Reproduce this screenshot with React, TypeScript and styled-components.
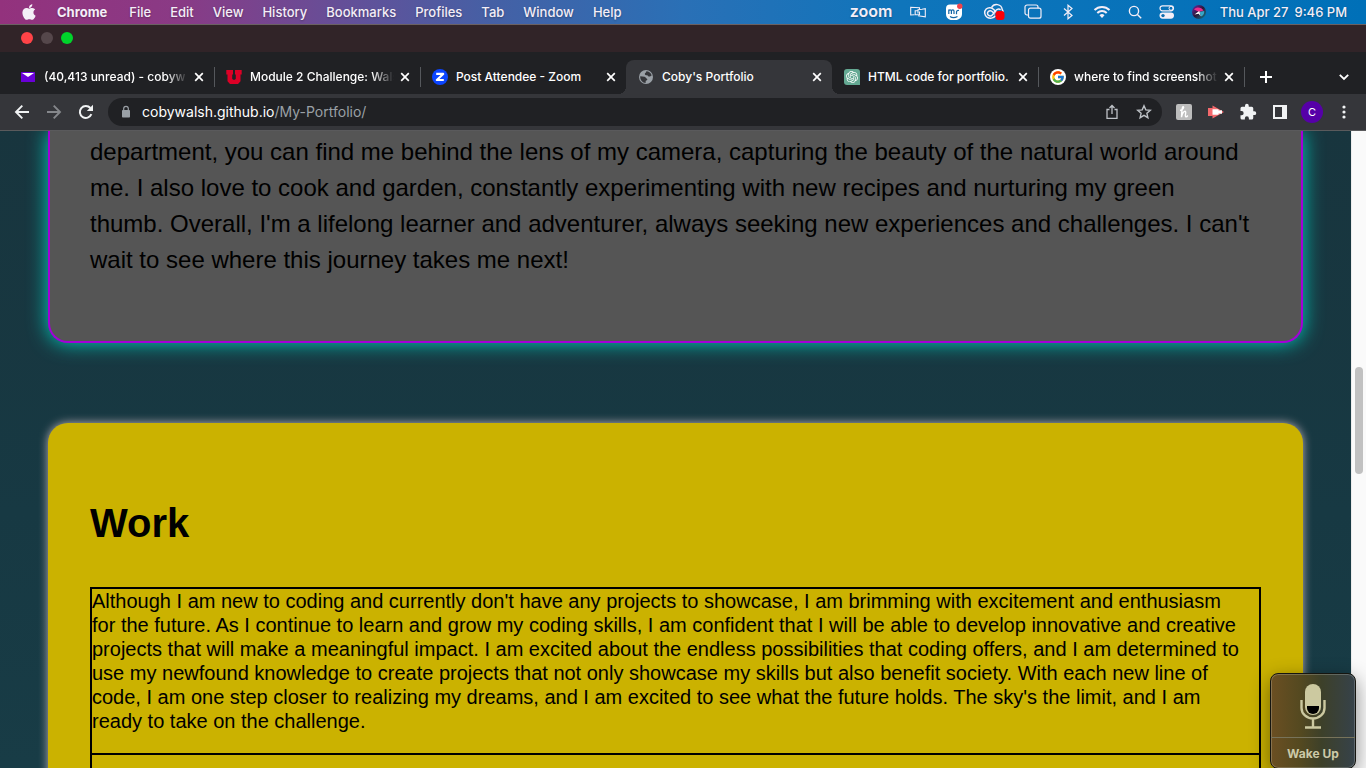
import React, { type ReactNode } from "react";
import styled, { createGlobalStyle, css } from "styled-components";
import { FaApple } from "react-icons/fa";
import { FcGoogle } from "react-icons/fc";
import { SiOpenai } from "react-icons/si";

const ui = `Inter, "Liberation Sans", sans-serif`;
const body = `"Liberation Sans", Helvetica, Arial, sans-serif`;

const GlobalStyle = createGlobalStyle`
  * { box-sizing: border-box; }
  html, body { margin: 0; padding: 0; overflow: hidden; }
  button, input { font: inherit; color: inherit; background: none; border: 0; padding: 0; margin: 0; }
  svg { display: block; flex: none; }
`;

const Screen = styled.div`
  position: relative;
  display: flex;
  flex-direction: column;
  height: 100vh;
  overflow: hidden;
  font-family: ${ui};
`;

/* macOS menu bar */
const MenuBar = styled.header`
  flex: none;
  display: flex;
  align-items: center;
  justify-content: space-between;
  height: 25px;
  padding: 0 19px 0 20px;
  color: #f4eef7;
  font-size: 13px;
  font-weight: 500;
  line-height: 24px;
  white-space: nowrap;
  text-shadow: 0 1px 2px rgba(0, 0, 0, 0.3);
  border-bottom: 1px solid #6b6163;
  background: linear-gradient(90deg, #93327d 0%, #8a3a85 13%, #654f98 25%, #4560a5 36%, #2a70b6 50%, #0f75bb 66%, #0070b8 100%);
`;

const MenuGroup = styled.nav`
  display: flex;
  align-items: center;
  gap: 19px;
`;

const MenuItem = styled.button<{ $bold?: boolean }>`
  font-weight: ${(p) => (p.$bold ? 700 : 500)};
  padding-right: ${(p) => (p.$bold ? "3px" : "0")};
  text-shadow: inherit;
`;

const StatusGroup = styled.div`
  display: flex;
  align-items: center;
`;

const ZoomWord = styled.span`
  width: 42px;
  margin-right: 18px;
  font-size: 16px;
  line-height: 20px;
  font-weight: 600;
  padding-bottom: 2px;
`;

const StatusIcon = styled.span<{ $w: number }>`
  display: flex;
  justify-content: center;
  width: ${(p) => p.$w}px;
`;

const Clock = styled.time`
  display: flex;
  gap: 6px;
  margin-left: 14px;
`;

/* Browser window */
const TitleBar = styled.div`
  flex: none;
  display: flex;
  align-items: center;
  gap: 8px;
  height: 27px;
  padding: 0 21px 1px;
  background: #312428;
`;

const Light = styled.button<{ $color: string }>`
  width: 12px;
  height: 12px;
  border-radius: 50%;
  background: ${(p) => p.$color};
`;

const TabStrip = styled.div`
  flex: none;
  display: flex;
  align-items: stretch;
  height: 42px;
  padding: 8px 12px 0 8px;
  background: #202124;
  color: #fff;
`;

const TabBox = styled.div<{ $active?: boolean; $bare?: boolean }>`
  position: relative;
  display: flex;
  align-items: center;
  flex: 0 1 206px;
  min-width: 0;
  padding: 0 8px 0 12px;
  font-size: 12px;
  font-weight: 500;
  ${(p) =>
    p.$active &&
    css`
      background: #35363a;
      border-radius: 8px 8px 0 0;
      &::before,
      &::after {
        content: "";
        position: absolute;
        bottom: 0;
        width: 8px;
        height: 8px;
      }
      &::before {
        left: -8px;
        background: radial-gradient(circle at 0 0, transparent 8px, #35363a 8px);
      }
      &::after {
        right: -8px;
        background: radial-gradient(circle at 100% 0, transparent 8px, #35363a 8px);
      }
    `}
  ${(p) =>
    !p.$active &&
    !p.$bare &&
    css`
      &::after {
        content: "";
        position: absolute;
        right: -1px;
        top: 7px;
        width: 1px;
        height: 20px;
        background: #55585c;
      }
    `}
`;

const TabTitle = styled.span<{ $fade?: boolean }>`
  flex: 1;
  min-width: 0;
  margin: 0 4px 0 8px;
  white-space: nowrap;
  line-height: 18px;
  mask-image: ${(p) => (p.$fade ? "linear-gradient(90deg, #000 calc(100% - 22px), transparent)" : "none")};
`;

const CloseButton = styled.button`
  display: flex;
  align-items: center;
  justify-content: center;
  width: 14px;
  height: 16px;
`;

const StripButton = styled.button<{ $end?: boolean }>`
  display: flex;
  align-items: center;
  justify-content: center;
  width: 20px;
  margin-left: ${(p) => (p.$end ? "auto" : "12px")};
`;

const Toolbar = styled.div`
  flex: none;
  display: flex;
  align-items: center;
  height: 37px;
  padding: 0 6px;
  border-bottom: 1px solid #5a5a5c;
  background: #35363a;
  color: #f1f3f4;
`;

const ToolButton = styled.button<{ $muted?: boolean }>`
  flex: none;
  display: flex;
  align-items: center;
  justify-content: center;
  width: 32px;
  height: 28px;
  color: ${(p) => (p.$muted ? "#85878b" : "inherit")};
`;

const Omnibox = styled.div`
  flex: 1;
  min-width: 0;
  display: flex;
  align-items: center;
  height: 28px;
  margin: 0 6px;
  padding: 0 2px 0 12px;
  border-radius: 14px;
  background: #202124;
  color: #bdc1c6;
`;

const Url = styled.a`
  flex: 1;
  margin-left: 10px;
  color: #9aa0a6;
  font-size: 14px;
  line-height: 20px;
  text-decoration: none;
  white-space: nowrap;
`;

const Host = styled.span`
  color: #fff;
`;

const Avatar = styled.span`
  display: flex;
  align-items: center;
  justify-content: center;
  width: 22px;
  height: 22px;
  border-radius: 50%;
  background: #5600a8;
  color: #fff;
  font-size: 11px;
`;

const ChatBadge = styled.span`
  flex: none;
  display: flex;
  align-items: center;
  justify-content: center;
  width: 16px;
  height: 16px;
  border-radius: 3px 3px 0 3px;
  background: #64a993;
`;

const GoogleBadge = styled.span`
  flex: none;
  display: flex;
  align-items: center;
  justify-content: center;
  width: 16px;
  height: 16px;
  border-radius: 50%;
  background: #fff;
`;

/* Web page */
const Viewport = styled.div`
  flex: 1;
  min-height: 0;
  display: flex;
`;

const Page = styled.main`
  flex: 1;
  min-width: 0;
  overflow: hidden;
  padding: 0 48px;
  background: linear-gradient(180deg, #18353e, #173943 60%, #183c46);
  font-family: ${body};
  color: #000;
`;

const AboutCard = styled.section`
  padding: 3px 40px 39px;
  margin-bottom: 80px;
  border: 2px solid #a400d8;
  border-top: 0;
  border-radius: 0 0 20px 20px;
  background: #555;
  box-shadow: 0 0 20px #00d0c0;
`;

const AboutText = styled.p`
  margin: 0 0 24px;
  font-size: 24px;
  line-height: 36px;
`;

const WorkCard = styled.section`
  padding: 77px 42px 40px;
  border-radius: 20px;
  background: #cbb200;
  box-shadow: 0 0 10px #bdb0b6;
`;

const WorkTitle = styled.h2`
  margin: 0 0 41px;
  font-size: 40px;
  line-height: 46px;
`;

const WorkPanel = styled.div`
  border: 2px solid #000;
  min-height: 168px;

  & + & {
    border-top: 0;
  }
`;

const WorkText = styled.p`
  margin: 0 0 20px;
  font-size: 20px;
  line-height: 24px;
`;

const ScrollTrack = styled.div`
  flex: none;
  display: flex;
  justify-content: center;
  width: 15px;
  padding-top: 236px;
  background: #fafafa;
  border-left: 1px solid #ececec;
`;

const ScrollThumb = styled.div`
  width: 8px;
  height: 107px;
  border-radius: 4px;
  background: #c1c1c1;
`;

/* Floating voice control panel */
const VoicePanel = styled.button`
  position: absolute;
  right: 10px;
  bottom: -1px;
  display: flex;
  flex-direction: column;
  align-items: stretch;
  width: 86px;
  height: 96px;
  border: 1px solid #15150f;
  border-radius: 8px;
  background: linear-gradient(90deg, #6b4f22 0%, #544920 35%, #3d4029 60%, #36424a 100%);
  box-shadow: inset 0 0 0 1px rgba(255, 255, 255, 0.2), 0 6px 20px rgba(0, 0, 0, 0.45);
  color: #ccc9a8;
`;

const MicArea = styled.span`
  flex: 1;
  display: flex;
  align-items: center;
  justify-content: center;
  border-bottom: 1px solid #77735a;
`;

const WakeLabel = styled.span`
  padding-top: 2px;
  font-size: 12px;
  line-height: 28px;
  font-weight: 700;
  text-align: center;
`;

const CloseIcon = () => (
  <svg width="10" height="10" viewBox="0 0 10 10" stroke="currentColor" strokeWidth="1.7" fill="none">
    <path d="M1.2 1.2l7.6 7.6M8.8 1.2L1.2 8.8" />
  </svg>
);

const MailIcon = () => (
  <svg width="16" height="16" viewBox="0 0 16 16">
    <rect x="1" y="3" width="14" height="10" rx="0.6" fill="#6a00d8" />
    <path d="M2 4h12L8 8z" fill="#fff" />
  </svg>
);

const UtahIcon = () => (
  <svg width="16" height="16" viewBox="0 0 16 16">
    <path
      fill="#dc0026"
      d="M0.300 1h6.700v4.400H6.200v4.400l.9.900h1.800l.9-.9V5.400H9V1h6.700v4.400h-1.200v6.900L12 15H4l-2.500-2.700V5.400H.3z"
    />
  </svg>
);

const ZoomIcon = () => (
  <svg width="16" height="16" viewBox="0 0 16 16">
    <circle cx="8" cy="8" r="8" fill="#0b45ff" />
    <path d="M4.200 4.900h7L4.800 11h7" fill="none" stroke="#fff" strokeWidth="2.100" strokeLinejoin="round" />
  </svg>
);

const GlobeIcon = () => (
  <svg width="16" height="16" viewBox="0 0 16 16">
    <circle cx="8" cy="8" r="7" fill="#9aa0a6" />
    <path
      d="M8.300 2.200c2.700 0 4.800 1.900 5.400 4.200-1 .3-1.500 1.300-2.600 1.200-1-.1-1-1.400-2.100-1.400-1 0-2.300-.4-2.200-1.500 0-1.100 1.600-.7 1.500-2.500zM2.200 7.200c1.600.2 3 .2 4.400.5 1.300.3 1.200 1.700 2.300 2 .9.300.3 1.700-.6 1.900-.9.200-.5 1.700-.7 2.300C4.500 13.900 2 11 2.200 7.200z"
      fill="#35363a"
    />
  </svg>
);

type TabData = { title: string; icon: ReactNode; active?: boolean; bare?: boolean; fade?: boolean };

const tabs: TabData[] = [
  { title: "(40,413 unread) - cobyw", icon: <MailIcon />, fade: true },
  { title: "Module 2 Challenge: Wals", icon: <UtahIcon />, fade: true },
  { title: "Post Attendee - Zoom", icon: <ZoomIcon />, bare: true },
  { title: "Coby's Portfolio", icon: <GlobeIcon />, active: true },
  {
    title: "HTML code for portfolio.",
    icon: (
      <ChatBadge>
        <SiOpenai size={12} />
      </ChatBadge>
    ),
  },
  {
    title: "where to find screenshot",
    icon: (
      <GoogleBadge>
        <FcGoogle size={14} />
      </GoogleBadge>
    ),
    fade: true,
  },
];

const menus = ["File", "Edit", "View", "History", "Bookmarks", "Profiles", "Tab", "Window", "Help"];

const StatusIcons = () => (
  <>
    <StatusIcon $w={16}>
      <svg width="16" height="12" viewBox="0 0 16 12" fill="none" stroke="currentColor" strokeWidth="1.100">
        <path d="M4.500 8.800L0.700 9V1.300L9.500 1.800V3.200" />
        <path d="M9.500 5.500V8.800H5.200V4.800H8" />
        <path d="M12 3.300L15.300 2.600V10.800L8 9.800M8 7.500V3.700L12 3.300" />
      </svg>
    </StatusIcon>
    <StatusIcon $w={56}>
      <svg width="18" height="18" viewBox="0 0 18 18">
        <path d="M5 1.500h8a4 4 0 0 1 4 4V11c0 3.500-3 6-6.500 6H7c-3.500 0-6-2.500-6-6V5.500a4 4 0 0 1 4-4z" fill="#fff" />
        <path
          d="M3.800 11V6.500M3.800 8c0-1.600 2.600-1.600 2.600 0v3M6.400 8c0-1.600 2.600-1.600 2.600 0v3M11.500 8.500v2.700M14 7.500c-1.500-.5-2.500.5-2.500 1.500M5 13.400c2 1.500 5 1.500 7.500 0"
          fill="none"
          stroke="#1465a5"
          strokeWidth="1.200"
        />
        <circle cx="14.800" cy="3.200" r="2.700" fill="#f0434b" />
      </svg>
    </StatusIcon>
    <StatusIcon $w={24}>
      <svg width="22" height="18" viewBox="0 0 22 18">
        <g fill="none" stroke="currentColor" strokeWidth="1.500">
          <path d="M8.500 4.600A5.700 5.700 0 0 1 19.200 6.500c.9 1.200 1.200 2.500.8 4" />
          <path d="M12.500 12.800C10.500 15.500 6.800 15.800 4.300 14.300 1.200 12.300.8 8.300 3.200 6c2.400-2.200 5.800-1.500 7.800.7l2.500 3" />
          <path d="M11.800 11.200L9.700 8.900C8.300 7.400 6.500 7.300 5.300 8.500s-1 3 .3 3.900c1.300.9 2.900.5 3.900-.7l2.600-3.600c1.600-2.200 3.800-2.600 5.600-1.500" />
        </g>
        <rect x="12.500" y="8" width="9" height="9" rx="3" fill="#fb0007" />
      </svg>
    </StatusIcon>
    <StatusIcon $w={54}>
      <svg width="18" height="16" viewBox="0 0 18 16" fill="none" stroke="currentColor" strokeWidth="1.200">
        <path d="M4.500 11H3a2 2 0 0 1-2-2V3a2 2 0 0 1 2-2h9a2 2 0 0 1 2 2v1.200" />
        <rect x="4.500" y="4.200" width="12.500" height="10" rx="2" />
      </svg>
    </StatusIcon>
    <StatusIcon $w={16}>
      <svg width="10" height="16" viewBox="0 0 10 16" fill="none" stroke="currentColor" strokeWidth="1.200">
        <path d="M1 4.500l8 7-4 3.300V1.200l4 3.300-8 7" />
      </svg>
    </StatusIcon>
    <StatusIcon $w={52}>
      <svg width="18" height="14" viewBox="0 0 18 14" fill="none" stroke="currentColor" strokeWidth="2">
        <path d="M1.500 5a10.600 10.600 0 0 1 15 0M4.300 8a6.700 6.700 0 0 1 9.400 0" />
        <path d="M6.500 10.200a3.600 3.600 0 0 1 5 0L9 13z" fill="currentColor" stroke="none" />
      </svg>
    </StatusIcon>
    <StatusIcon $w={14}>
      <svg width="14" height="14" viewBox="0 0 14 14" fill="none" stroke="currentColor" strokeWidth="1.400">
        <circle cx="6" cy="6" r="4.600" />
        <path d="M9.400 9.400l3.800 3.800" />
      </svg>
    </StatusIcon>
    <StatusIcon $w={50}>
      <svg width="16" height="14" viewBox="0 0 16 14">
        <rect x="1" y="0.800" width="13.500" height="5" rx="2.500" fill="none" stroke="currentColor" strokeWidth="1.200" />
        <circle cx="12" cy="3.300" r="2" fill="none" stroke="currentColor" />
        <rect x="0.500" y="7.500" width="14.500" height="6.200" rx="3.100" fill="currentColor" />
        <circle cx="4" cy="10.600" r="1.700" fill="#0f6cae" />
      </svg>
    </StatusIcon>
    <StatusIcon $w={14}>
      <svg width="14" height="14" viewBox="0 0 14 14">
        <defs>
          <linearGradient id="orb" x1="0" y1="0" x2="1" y2="1">
            <stop offset="0" stopColor="#6a2ab0" />
            <stop offset="0.500" stopColor="#2a1838" />
            <stop offset="1" stopColor="#0f8090" />
          </linearGradient>
        </defs>
        <circle cx="7" cy="7" r="7" fill="url(#orb)" />
        <path d="M2 4.500c2.500-3 7.500-2.500 9.500 1L7.200 7z" fill="#ee2a8a" />
        <path d="M7.200 7l5-1c.3 2.500-.8 4.500-3 5.500z" fill="#37a6c8" />
        <path d="M2.500 9.500L7.200 6l1.500 5.500-1.900-2.800z" fill="#fff" />
      </svg>
    </StatusIcon>
  </>
);

const App = () => (
  <Screen>
    <GlobalStyle />
    <MenuBar>
      <MenuGroup aria-label="Application menu">
        <FaApple size={18} />
        <MenuItem $bold>Chrome</MenuItem>
        {menus.map((name) => (
          <MenuItem key={name}>{name}</MenuItem>
        ))}
      </MenuGroup>
      <StatusGroup>
        <ZoomWord>zoom</ZoomWord>
        <StatusIcons />
        <Clock>
          <span>Thu Apr 27</span>
          <span>9:46 PM</span>
        </Clock>
      </StatusGroup>
    </MenuBar>

    <TitleBar>
      <Light $color="#ff4347" aria-label="Close window" />
      <Light $color="#55474b" aria-label="Minimize window" />
      <Light $color="#00d32b" aria-label="Zoom window" />
    </TitleBar>

    <TabStrip>
      {tabs.map((tab) => (
        <TabBox key={tab.title} $active={tab.active} $bare={tab.bare}>
          {tab.icon}
          <TabTitle $fade={tab.fade}>{tab.title}</TabTitle>
          <CloseButton aria-label="Close tab">
            <CloseIcon />
          </CloseButton>
        </TabBox>
      ))}
      <StripButton aria-label="New tab">
        <svg width="12" height="12" viewBox="0 0 12 12" stroke="currentColor" strokeWidth="2">
          <path d="M6 0v12M0 6h12" />
        </svg>
      </StripButton>
      <StripButton $end aria-label="Search tabs">
        <svg width="10" height="8" viewBox="0 0 10 8" stroke="currentColor" strokeWidth="1.800" fill="none">
          <path d="M0.800 1.800L5 6l4.200-4.200" />
        </svg>
      </StripButton>
    </TabStrip>

    <Toolbar>
      <ToolButton aria-label="Back">
        <svg width="16" height="16" viewBox="0 0 16 16" stroke="currentColor" strokeWidth="1.900" fill="none">
          <path d="M15 8H2.500M8.300 1.700L2 8l6.300 6.300" />
        </svg>
      </ToolButton>
      <ToolButton $muted aria-label="Forward">
        <svg width="16" height="16" viewBox="0 0 16 16" stroke="currentColor" strokeWidth="1.900" fill="none">
          <path d="M1 8h12.500M7.700 1.700L14 8l-6.300 6.300" />
        </svg>
      </ToolButton>
      <ToolButton aria-label="Reload">
        <svg width="16" height="16" viewBox="0 0 16 16" fill="none">
          <path d="M13.400 10.200A6 6 0 1 1 12.400 4" stroke="currentColor" strokeWidth="2" />
          <path d="M15 0.800v6.200H8.800z" fill="currentColor" />
        </svg>
      </ToolButton>
      <Omnibox>
        <svg width="12" height="14" viewBox="0 0 12 14">
          <rect x="2" y="5" width="8" height="7.500" rx="0.800" fill="#9aa0a6" />
          <path d="M3.700 5V3.600a2.300 2.300 0 0 1 4.600 0V5" stroke="#9aa0a6" strokeWidth="1.200" fill="none" />
        </svg>
        <Url href="#work">
          <Host>cobywalsh.github.io</Host>/My-Portfolio/
        </Url>
        <ToolButton aria-label="Share">
          <svg width="14" height="16" viewBox="0 0 14 16" stroke="currentColor" strokeWidth="1.300" fill="none">
            <path d="M4.500 5.500H2v8.800h10V5.500H9.500M7 10V1.500M4.500 4L7 1.500 9.500 4" />
          </svg>
        </ToolButton>
        <ToolButton aria-label="Bookmark">
          <svg width="16" height="16" viewBox="0 0 16 16" stroke="currentColor" strokeWidth="1.400" fill="none">
            <path d="M8 1.800l1.800 4.100 4.500.4-3.400 3 1 4.400L8 11.400l-3.900 2.300 1-4.400-3.400-3 4.500-.4z" />
          </svg>
        </ToolButton>
      </Omnibox>
      <ToolButton aria-label="Honey">
        <svg width="16" height="16" viewBox="0 0 16 16">
          <rect width="16" height="16" rx="2" fill="#bdbdbd" />
          <path
            d="M4 6.500C6.500 6 8.300 3.600 7.400 2.700 6.600 2 5.700 5 5.500 13.200 6.200 9 8.300 6.700 9.400 7.300c1.300.8-1 4.600.2 5.400.8.400 1.600-.3 2.200-1.200"
            fill="none"
            stroke="#fff"
            strokeWidth="1.400"
          />
        </svg>
      </ToolButton>
      <ToolButton aria-label="Recorder">
        <svg width="16" height="14" viewBox="0 0 16 14">
          <path d="M0 3h4.500V0.600L16 7 4.500 13.400V11H0z" fill="#f4696c" />
          <path d="M4.500 4.300h6v1.200l3.500-.2V8.700l-3.500-.2v1.200h-6z" fill="#fff" />
        </svg>
      </ToolButton>
      <ToolButton aria-label="Extensions">
        <svg width="18" height="18" viewBox="0 0 24 24" fill="currentColor">
          <path d="M20.500 11H19V7a2 2 0 0 0-2-2h-4V3.500a2.500 2.500 0 0 0-5 0V5H4a2 2 0 0 0-2 2v3.800h1.500a2.700 2.700 0 0 1 0 5.400H2V20a2 2 0 0 0 2 2h3.800v-1.500a2.700 2.700 0 0 1 5.400 0V22H17a2 2 0 0 0 2-2v-4h1.500a2.500 2.500 0 0 0 0-5z" />
        </svg>
      </ToolButton>
      <ToolButton aria-label="Side panel">
        <svg width="14" height="14" viewBox="0 0 14 14">
          <path fill="currentColor" fillRule="evenodd" d="M0 0h14v14H0zM2 2v10h7V2z" />
        </svg>
      </ToolButton>
      <ToolButton aria-label="Profile">
        <Avatar>C</Avatar>
      </ToolButton>
      <ToolButton aria-label="More">
        <svg width="4" height="14" viewBox="0 0 4 14" fill="currentColor">
          <circle cx="2" cy="2" r="1.600" />
          <circle cx="2" cy="7" r="1.600" />
          <circle cx="2" cy="12" r="1.600" />
        </svg>
      </ToolButton>
    </Toolbar>

    <Viewport>
      <Page>
        <AboutCard>
          <AboutText>
            department, you can find me behind the lens of my camera, capturing the beauty of the natural world around
            <br />
            me. I also love to cook and garden, constantly experimenting with new recipes and nurturing my green
            <br />
            thumb. Overall, I'm a lifelong learner and adventurer, always seeking new experiences and challenges. I can't
            <br />
            wait to see where this journey takes me next!
          </AboutText>
        </AboutCard>
        <WorkCard id="work">
          <WorkTitle>Work</WorkTitle>
          <WorkPanel>
            <WorkText>
              Although I am new to coding and currently don't have any projects to showcase, I am brimming with
              excitement and enthusiasm
              <br />
              for the future. As I continue to learn and grow my coding skills, I am confident that I will be able to
              develop innovative and creative
              <br />
              projects that will make a meaningful impact. I am excited about the endless possibilities that coding
              offers, and I am determined to
              <br />
              use my newfound knowledge to create projects that not only showcase my skills but also benefit society.
              With each new line of
              <br />
              code, I am one step closer to realizing my dreams, and I am excited to see what the future holds. The
              sky's the limit, and I am
              <br />
              ready to take on the challenge.
            </WorkText>
          </WorkPanel>
          <WorkPanel />
        </WorkCard>
      </Page>
      <ScrollTrack>
        <ScrollThumb />
      </ScrollTrack>
    </Viewport>

    <VoicePanel>
      <MicArea>
        <svg width="26" height="46" viewBox="0 0 26 46" fill="none">
          <rect x="5" y="1" width="16" height="31" rx="8" fill="#ccc9a0" />
          <path d="M7 23h12v2a6 6 0 0 1-12 0z" fill="#000" />
          <path d="M1.500 17v8a11.500 10.500 0 0 0 23 0v-8M13 35.500V44M5 44.500h16" stroke="#ccc9a0" strokeWidth="2.400" />
        </svg>
      </MicArea>
      <WakeLabel>Wake Up</WakeLabel>
    </VoicePanel>
  </Screen>
);

export default App;
